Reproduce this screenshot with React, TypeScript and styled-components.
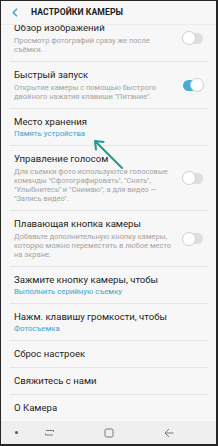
import React from "react";
import styled, { createGlobalStyle } from "styled-components";

const Global = createGlobalStyle`
  html, body { margin: 0; padding: 0; background: #f7f7f7; }
  body { font-family: Roboto, "Noto Sans", "Liberation Sans", sans-serif; }
  * { box-sizing: border-box; }
`;

const Frame = styled.div`
  position: relative;
  width: 218px;
  height: 446px;
  background: #f7f7f7;
  border-style: solid;
  border-color: #262626;
  border-width: 1px 2px 2px 1px;
  display: flex;
  flex-direction: column;
  overflow: hidden;
`;

const Header = styled.header`
  position: relative;
  z-index: 2;
  height: 24px;
  flex: none;
  display: flex;
  align-items: center;
  padding-left: 11px;
  gap: 13px;
  background: #f7f7f7;
  border-bottom: 1px solid #ececec;
`;

const Title = styled.h1`
  margin: 0;
  font-size: 8.6px;
  font-weight: 700;
  letter-spacing: 0.1px;
  color: #1c1c1c;
  line-height: 1;
`;

const List = styled.div`
  flex: 1;
  overflow: hidden;
`;

const Scroll = styled.div`
  margin-top: -10px;
  display: flex;
  flex-direction: column;
`;

const Item = styled.div<{ $last?: boolean }>`
  margin: 0 8px 0 9px;
  padding: 7px 5px 7px 4px;
  border-bottom: ${p => (p.$last ? "none" : "1px solid #e4e4e4")};
  display: flex;
  align-items: center;
  gap: 6px;
`;

const Texts = styled.div`
  flex: 1;
  min-width: 0;
  display: flex;
  flex-direction: column;
`;

const ItemTitle = styled.div`
  font-size: 9.6px;
  line-height: 12px;
  color: #1e1e1e;
  white-space: nowrap;
`;

const Sub = styled.div`
  margin-top: 2px;
  font-size: 7.5px;
  line-height: 9px;
  color: #a3a3a3;
  white-space: nowrap;
`;

const Value = styled.div`
  margin-top: 1px;
  font-size: 7.8px;
  line-height: 9px;
  color: #3fa3cb;
  white-space: nowrap;
`;

const Toggle = styled.div<{ $on: boolean }>`
  position: relative;
  flex: none;
  width: 20px;
  height: 11px;
  border-radius: 6px;
  background: ${p => (p.$on ? "#47add4" : "#dedede")};
  &::after {
    content: "";
    position: absolute;
    top: -1px;
    ${p => (p.$on ? "right: -1px;" : "left: -1px;")}
    width: 12px;
    height: 12px;
    margin-top: -0.5px;
    border-radius: 50%;
    background: #fff;
    border: 1px solid #cfcfcf;
  }
`;

const NavBar = styled.nav`
  height: 23px;
  flex: none;
  background: #efefef;
  display: flex;
  align-items: center;
  padding-left: 12px;
`;

const NavDot = styled.div`
  width: 6px;
  display: flex;
  justify-content: center;
  &::before {
    content: "";
    width: 3px;
    height: 3px;
    border-radius: 50%;
    background: #555;
  }
`;

const NavButton = styled.div`
  width: 60px;
  display: flex;
  justify-content: center;
  align-items: center;
  height: 100%;
`;

const Overlay = styled.svg`
  position: absolute;
  left: 0;
  top: 0;
  pointer-events: none;
  z-index: 3;
`;

type Row = {
  title: string;
  sub?: string[];
  value?: string;
  toggle?: boolean;
};

const rows: Row[] = [
  { title: "Обзор изображений", sub: ["Просмотр фотографий сразу же после", "съёмки."], toggle: false },
  { title: "Быстрый запуск", sub: ["Открытие камеры с помощью быстрого", "двойного нажатия клавиши \"Питание\"."], toggle: true },
  { title: "Место хранения", value: "Память устройства" },
  {
    title: "Управление голосом",
    sub: [
      "Для съемки фото используются голосовые",
      "команды \"Сфотографировать\", \"Снять\",",
      "\"Улыбнитесь\" и \"Снимаю\", а для видео —",
      "\"Запись видео\".",
    ],
    toggle: false,
  },
  {
    title: "Плавающая кнопка камеры",
    sub: ["Добавьте дополнительную кнопку камеры,", "которую можно переместить в любое место", "на экране."],
    toggle: false,
  },
  { title: "Зажмите кнопку камеры, чтобы", value: "Выполнить серийную съемку" },
  { title: "Нажм. клавишу громкости, чтобы", value: "Фотосъемка" },
  { title: "Сброс настроек" },
  { title: "Свяжитесь с нами" },
  { title: "О Камера" },
];

export default function App() {
  return (
    <>
      <Global />
      <Frame>
        <Header>
          <svg width="6" height="9" viewBox="0 0 6 9">
            <path d="M5 0.8 L1.2 4.5 L5 8.2" fill="none" stroke="#3aa3c2" strokeWidth="1.3" />
          </svg>
          <Title>НАСТРОЙКИ КАМЕРЫ</Title>
        </Header>
        <List>
          <Scroll>
            {rows.map((r, i) => (
              <Item key={r.title} $last={i === rows.length - 1}>
                <Texts>
                  <ItemTitle>{r.title}</ItemTitle>
                  {r.value && <Value>{r.value}</Value>}
                  {r.sub && (
                    <Sub>
                      {r.sub.map((l, j) => (
                        <React.Fragment key={j}>
                          {l}
                          {j < r.sub!.length - 1 && <br />}
                        </React.Fragment>
                      ))}
                    </Sub>
                  )}
                </Texts>
                {r.toggle !== undefined && <Toggle $on={r.toggle} />}
              </Item>
            ))}
          </Scroll>
        </List>
        <NavBar>
          <NavDot />
          <NavButton>
            <svg width="11" height="10" viewBox="0 0 11 10">
              <path d="M2 2.5 H9.5 V4 M9 7 H1.5 V5.5" fill="none" stroke="#777" strokeWidth="1" />
            </svg>
          </NavButton>
          <NavButton>
            <svg width="10" height="10" viewBox="0 0 10 10">
              <rect x="1" y="1" width="8" height="8" rx="1.5" fill="none" stroke="#777" strokeWidth="1" />
            </svg>
          </NavButton>
          <NavButton>
            <svg width="10" height="10" viewBox="0 0 10 10">
              <path d="M5 1 L1 5 L5 9 M1 5 H9.5" fill="none" stroke="#777" strokeWidth="1" />
            </svg>
          </NavButton>
        </NavBar>
        <Overlay width="218" height="446" viewBox="0 0 218 446">
          <path d="M121 167 L94.5 140.5" stroke="#1c9a8c" strokeWidth="2" strokeLinecap="round" fill="none" />
          <path d="M102.5 141 L94 140 L95 148.5" stroke="#1c9a8c" strokeWidth="2" strokeLinecap="round" strokeLinejoin="round" fill="none" />
        </Overlay>
      </Frame>
    </>
  );
}
